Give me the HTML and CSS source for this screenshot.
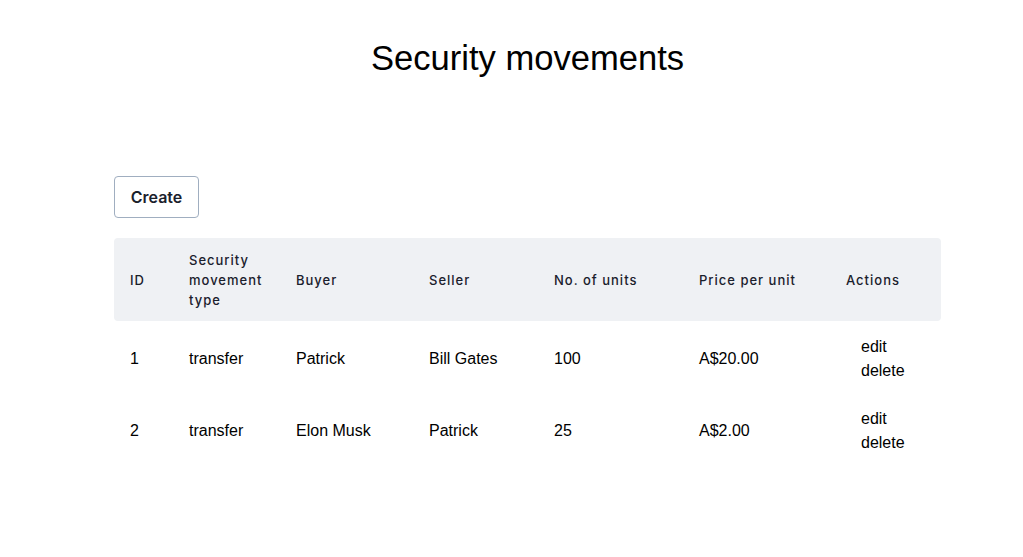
FILE: index.html
```html
<!DOCTYPE html>
<html>
<head>
<meta charset="utf-8">
<link rel="stylesheet" href="styles.css">
</head>
<body>
<main class="page">
  <h1 class="title">Security movements</h1>
  <div class="content">
    <button class="btn">Create</button>
    <table class="tbl">
      <colgroup>
        <col class="c-id"><col class="c-type"><col class="c-buyer"><col class="c-seller"><col class="c-units"><col class="c-price"><col class="c-actions">
      </colgroup>
      <thead>
        <tr>
          <th>ID</th>
          <th>Security movement type</th>
          <th>Buyer</th>
          <th>Seller</th>
          <th>No. of units</th>
          <th>Price per unit</th>
          <th>Actions</th>
        </tr>
      </thead>
      <tbody>
        <tr>
          <td>1</td><td>transfer</td><td>Patrick</td><td>Bill Gates</td><td>100</td><td>A$20.00</td>
          <td><div class="actions"><span>edit</span><span>delete</span></div></td>
        </tr>
        <tr>
          <td>2</td><td>transfer</td><td>Elon Musk</td><td>Patrick</td><td>25</td><td>A$2.00</td>
          <td><div class="actions"><span>edit</span><span>delete</span></div></td>
        </tr>
      </tbody>
    </table>
  </div>
</main>
</body>
</html>
```

FILE: styles.css
```css
html, body {
  margin: 0;
  padding: 0;
  background: #ffffff;
}
body {
  font-family: "Liberation Sans", Arial, sans-serif;
  color: #000000;
  padding-left: 32px;
}
.page {
  width: 827px;
  margin: 0 auto;
}
.title {
  margin: 0;
  padding-top: 38px;
  text-align: center;
  font-size: 34.6px;
  font-weight: 400;
  line-height: 40px;
  height: 176px;
  box-sizing: border-box;
}
.content {
  display: flex;
  flex-direction: column;
  align-items: flex-start;
  gap: 20px;
}
.btn {
  height: 42px;
  width: 85px;
  border: 1px solid #a0aec0;
  border-radius: 4px;
  background: #ffffff;
  font-family: Inter, sans-serif;
  font-weight: 600;
  font-size: 16px;
  color: #1a202c;
  padding: 0;
}
.tbl {
  width: 827px;
  border-collapse: separate;
  border-spacing: 0;
  table-layout: fixed;
}
.c-id { width: 59px; }
.c-type { width: 107px; }
.c-buyer { width: 133px; }
.c-seller { width: 125px; }
.c-units { width: 145px; }
.c-price { width: 147px; }
.c-actions { width: 111px; }
.tbl th {
  background: #eff1f4;
  text-align: left;
  font-family: Inter, sans-serif;
  font-weight: 500;
  font-size: 13px;
  letter-spacing: 1px;
  line-height: 20px;
  color: #1a202c;
  padding: 12px 16px 11px;
  height: 83px;
  box-sizing: border-box;
}
.tbl th:first-child { border-radius: 4px 0 0 4px; }
.tbl th:last-child { border-radius: 0 4px 4px 0; }
.tbl td {
  font-size: 16px;
  line-height: 24px;
  padding: 14px 16px 10px;
  height: 72px;
  box-sizing: border-box;
}
.actions {
  display: flex;
  flex-direction: column;
  padding-left: 15px;
}
```
